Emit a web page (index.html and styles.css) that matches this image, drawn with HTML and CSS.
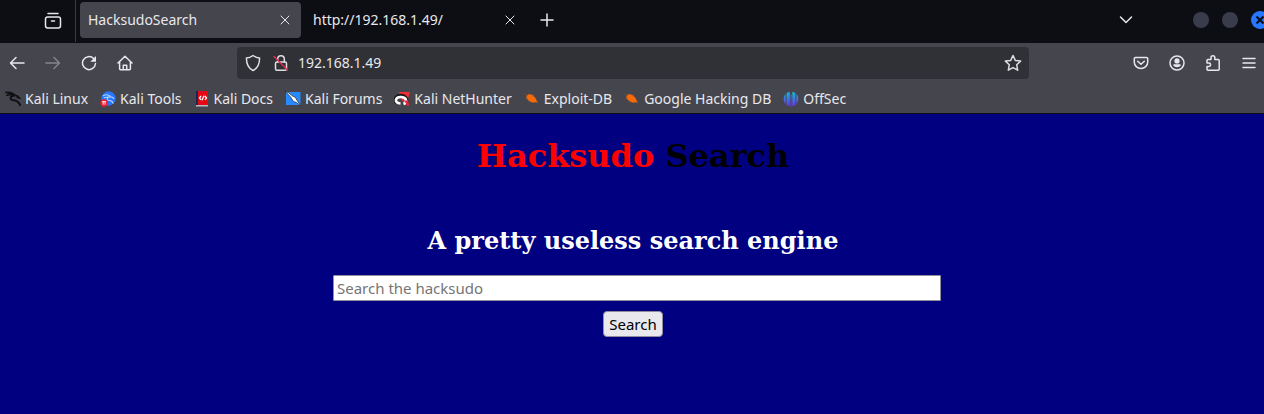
FILE: index.html
```html
<!DOCTYPE html>
<html lang="en">
<head>
<meta charset="utf-8">
<title>HacksudoSearch</title>
<link rel="stylesheet" href="styles.css">
</head>
<body>
<header class="browser">
  <div class="tabbar">
    <button class="view-button" aria-label="Firefox View">
      <svg width="18" height="18" viewBox="0 0 18 18" class="line"><path d="M4 1.500h10"/><rect x="1.500" y="5" width="15" height="11" rx="2.200"/><path d="M7.500 9h3"/></svg>
    </button>
    <div class="tab tab-active">
      <span class="tab-title">HacksudoSearch</span>
      <button class="tab-close" aria-label="Close tab"><svg width="10" height="10" viewBox="0 0 10 10" class="thin"><path d="M1 1l8 8M9 1L1 9"/></svg></button>
    </div>
    <div class="tab">
      <span class="tab-title">http://192.168.1.49/</span>
      <button class="tab-close" aria-label="Close tab"><svg width="10" height="10" viewBox="0 0 10 10" class="thin"><path d="M1 1l8 8M9 1L1 9"/></svg></button>
    </div>
    <button class="icon-button new-tab" aria-label="New tab"><svg width="14" height="14" viewBox="0 0 14 14" class="line"><path d="M7 1v12M1 7h12"/></svg></button>
    <div class="window-controls">
      <button class="icon-button list-tabs" aria-label="List all tabs"><svg width="14" height="14" viewBox="0 0 14 14" class="line"><path d="M1.500 4L7 9.500 12.500 4"/></svg></button>
      <button class="dot" aria-label="Minimize"></button>
      <button class="dot" aria-label="Maximize"></button>
      <button class="dot dot-close" aria-label="Close window"><svg width="10" height="10" viewBox="0 0 10 10"><path d="M1.500 1.500l7 7M8.500 1.500l-7 7" stroke="#0d1017" stroke-width="2.200"/></svg></button>
    </div>
  </div>

  <div class="toolbar">
    <nav class="buttons">
      <button class="icon-button" aria-label="Back"><svg width="16" height="16" viewBox="0 0 16 16" class="line"><path d="M15 8H1.500M7 2.500L1.500 8 7 13.500"/></svg></button>
      <button class="icon-button disabled" aria-label="Forward" disabled><svg width="16" height="16" viewBox="0 0 16 16" class="line"><path d="M1 8h13.500M9 2.500L14.500 8 9 13.500"/></svg></button>
      <button class="icon-button" aria-label="Reload"><svg width="16" height="16" viewBox="0 0 16 16" class="line"><path d="M12.700 3.600A6.500 6.500 0 1 0 14.500 8.500"/><path d="M15 1v5.700H9.300z" fill="currentColor" stroke="none"/></svg></button>
      <button class="icon-button" aria-label="Home"><svg width="16" height="16" viewBox="0 0 16 16" class="line"><path d="M1 8l7-6.700L15 8M2.600 6.800v7a1 1 0 0 0 1 1h8.800a1 1 0 0 0 1-1v-7"/><path d="M6.300 14.500v-4.300h3.400v4.300"/></svg></button>
    </nav>
    <div class="urlbar">
      <svg width="16" height="18" viewBox="0 0 16 18" class="line"><path d="M8 1.500C6 3 3.500 3.900 1.400 4c0 6 1.300 10 6.600 12.500C13.300 14 14.600 10 14.600 4 12.500 3.900 10 3 8 1.500z"/></svg>
      <svg width="16" height="18" viewBox="0 0 16 18" class="line"><rect x="2.500" y="8" width="11" height="8.300" rx="1.500"/><path d="M4.700 8V5a3.300 3.300 0 0 1 6.600 0v3"/><path d="M1 2.500l13.500 13.500" stroke="#e22850"/></svg>
      <input class="url-input" type="text" value="192.168.1.49" aria-label="Address">
      <button class="icon-button" aria-label="Bookmark this page"><svg width="18" height="18" viewBox="0 0 18 18" class="line"><path d="M9 1.500l2.300 4.900 5.300.7-3.900 3.700 1 5.400L9 13.600l-4.700 2.600 1-5.400L1.400 7.100l5.300-.7z"/></svg></button>
    </div>
    <div class="buttons">
      <button class="icon-button" aria-label="Pocket"><svg width="16" height="16" viewBox="0 0 16 16" class="line"><path d="M2.500 2.500h11a1.200 1.200 0 0 1 1.200 1.200v3.500a6.700 6.300 0 0 1-13.400 0V3.700a1.200 1.200 0 0 1 1.200-1.200z"/><path d="M4.700 6.300L8 9.300l3.300-3"/></svg></button>
      <button class="icon-button" aria-label="Account"><svg width="16" height="16" viewBox="0 0 16 16" class="line"><circle cx="8" cy="8" r="7"/><circle cx="8" cy="5.900" r="2.600" fill="currentColor" stroke="none"/><path d="M4.100 10.200a1 1 0 0 1 1-.9h5.800a1 1 0 0 1 1 .9 4.700 4.700 0 0 1-7.800 0z" fill="currentColor" stroke="none"/></svg></button>
      <button class="icon-button" aria-label="Extensions"><svg width="16" height="18" viewBox="0 0 16 18" class="line"><path d="M2 6.500a1 1 0 0 1 1-1h3V3.600a1.900 1.900 0 0 1 3.800 0v1.900h3.400a1 1 0 0 1 1 1v8.800a1 1 0 0 1-1 1H3a1 1 0 0 1-1-1v-2.800h1.900a1.700 1.700 0 0 0 0-3.400H2z"/></svg></button>
      <button class="icon-button" aria-label="Menu"><svg width="14" height="14" viewBox="0 0 14 14" class="line"><path d="M1 2.500h12M1 7h12M1 11.500h12"/></svg></button>
    </div>
  </div>

  <nav class="bookmarks" aria-label="Bookmarks">
    <a class="bookmark" href="#"><svg width="16" height="16" viewBox="0 0 16 16" fill="none" stroke="#101114"><path d="M0 1.500C4 .8 8 2 10 4.200M1 4.500c3-1.200 5-1 8 0M2 2.800l6 .7" stroke-width="1.300"/><path d="M9.500 4.500C5 5 4.500 8.500 7.500 9c3.500.3 6.500 1.500 8 6" stroke-width="2"/><path d="M9 4.500c2.500-.5 4 .5 5.500 2.500l-3-.8" stroke-width="1.600"/></svg>Kali Linux</a>
    <a class="bookmark" href="#"><svg width="16" height="16" viewBox="0 0 16 16"><circle cx="8.500" cy="7.500" r="7.200" fill="#2777ff"/><path d="M3 5c3-2 6-1 7.500.5M4 7c3-1.500 5-.8 6.500-1 2-.3 3 .8 3.500 2M9 6c-3 1-2 3.500.5 3.500 2 .1 3.300 1.500 3.500 3" fill="none" stroke="#b5d2ff" stroke-width="1.100"/><circle cx="4" cy="12" r="3.700" fill="#ed1c2e"/><path d="M2 10.700h4M3.200 10.700v3M5.100 10.700v3" stroke="#fff" stroke-width=".9"/></svg>Kali Tools</a>
    <a class="bookmark" href="#"><svg width="16" height="16" viewBox="0 0 16 16"><path d="M2 0h2v14H2z" fill="#172654"/><path d="M4 0h10v14H4z" fill="#e50914"/><path d="M2 14h12v1.500H2z" fill="#b9bbc4"/><path d="M7 5L5.500 7 7 8.800M11 5l1.500 2L11 8.800M10 4.800L8 9.200" fill="none" stroke="#fff" stroke-width="1.300"/></svg>Kali Docs</a>
    <a class="bookmark" href="#"><svg width="16" height="16" viewBox="0 0 16 16"><path d="M1 1h14.500v13H1z" fill="#258bff"/><path d="M0 0l4 2 3.500 3 2.500 1 2.500 4 3.500 5.500-4.500-4-3-1-3-4.500z" fill="#fff" stroke="#20242c" stroke-width=".7"/></svg>Kali Forums</a>
    <a class="bookmark" href="#"><svg width="16" height="16" viewBox="0 0 16 16"><path d="M5 1h11l-2 7 1 7-4-2-5-6z" fill="#f22b35"/><path d="M2.500 12C-.5 7 4 3.500 8.500 4.800c4.500 1.700 5 5.200 3 8.200" fill="none" stroke="#17181c" stroke-width="3.600"/><path d="M6.500 12.500C-.5 12 1 5.500 7.500 6c5.500.6 6 5.500 2 7" fill="none" stroke="#fff" stroke-width="2.600"/><path d="M11.500 9.500l2.500 5" stroke="#ed2441" stroke-width="2"/></svg>Kali NetHunter</a>
    <a class="bookmark" href="#"><svg width="16" height="16" viewBox="0 0 16 16"><path d="M2.500 5C4 2.500 8 3 10 5.500c1.500 1 2.500 3 2.700 4.500l1.500 1.500-2.500-.3c-2.500.8-5 .2-6.700-1.500C3 8.500 2 7 2.500 5z" fill="#f66a0a"/><path d="M1 3l3 2M1 8l3-1M5 12l1-2M9 3l1 3" stroke="#a3501d" stroke-width=".6"/></svg>Exploit-DB</a>
    <a class="bookmark" href="#"><svg width="16" height="16" viewBox="0 0 16 16"><path d="M2.500 5C4 2.500 8 3 10 5.500c1.500 1 2.500 3 2.700 4.500l1.500 1.500-2.500-.3c-2.500.8-5 .2-6.700-1.500C3 8.500 2 7 2.500 5z" fill="#f66a0a"/><path d="M1 3l3 2M1 8l3-1M5 12l1-2M9 3l1 3" stroke="#a3501d" stroke-width=".6"/></svg>Google Hacking DB</a>
    <a class="bookmark" href="#"><svg width="16" height="16" viewBox="0 0 16 16"><defs><linearGradient id="offsec" gradientUnits="userSpaceOnUse" x1="0" y1="1" x2="0" y2="15"><stop offset="0" stop-color="#16b8d8"/><stop offset="1" stop-color="#6a35f0"/></linearGradient></defs><path d="M2.600 3v10C.1 10.500.1 5.500 2.600 3zM3.600 2L6.700.8v14.400L3.600 14zM7.600 3.500h.8V16h-.8zM9.300.8l3.100 1.200v12l-3.100 1.200zM13.400 3v10c2.500-2.500 2.500-7.500 0-10z" fill="url(#offsec)"/></svg>OffSec</a>
  </nav>
</header>

<main class="page">
  <h1 class="heading"><span class="heading-accent">Hacksudo</span> Search</h1>
  <h2 class="tagline">A pretty useless search engine</h2>
  <form class="search">
    <input class="search-input" type="text" placeholder="Search the hacksudo" aria-label="Search the hacksudo">
    <button class="search-button" type="submit">Search</button>
  </form>
</main>
</body>
</html>
```
FILE: styles.css
```css
* { box-sizing: border-box; }

body {
  margin: 0;
  min-height: 100vh;
  display: flex;
  flex-direction: column;
  background: #000080;
  font-family: "Noto Sans", sans-serif;
}

button {
  margin: 0;
  padding: 0;
  border: 0;
  background: none;
  color: inherit;
  font: inherit;
}

svg { display: block; flex: none; }

.line, .thin {
  fill: none;
  stroke: currentColor;
  stroke-width: 1.5;
  stroke-linecap: round;
  stroke-linejoin: round;
}
.thin { stroke-width: 1; }

.browser {
  background: #45454e;
  color: #e8e8ec;
  font-size: 14px;
  line-height: 20px;
  border-bottom: 1px solid #0d0e14;
}

.tabbar {
  display: flex;
  align-items: center;
  gap: 4px;
  height: 43px;
  padding-bottom: 3px;
  background: #0d0e14;
  overflow: hidden;
}

.view-button {
  display: flex;
  justify-content: flex-end;
  align-items: center;
  align-self: stretch;
  width: 76px;
  margin-bottom: -2px;
  padding-right: 13px;
  border-right: 1px solid #3a3b42;
}

.tab {
  display: flex;
  align-items: center;
  justify-content: space-between;
  width: 221px;
  height: 36px;
  padding: 0 8px;
  border-radius: 4px;
}
.tab-active { background: #45454e; }

.tab-close { display: flex; padding: 3px; }

.icon-button {
  display: flex;
  align-items: center;
  justify-content: center;
  width: 28px;
  height: 32px;
  flex: none;
}
.new-tab { margin-left: 3px; }
.disabled { color: #85858d; }

.window-controls {
  display: flex;
  align-items: center;
  gap: 13px;
  margin-left: auto;
  margin-right: -5px;
}
.list-tabs { margin-right: 40px; }

.dot {
  width: 16px;
  height: 16px;
  border-radius: 50%;
  background: #393d4b;
}
.dot-close {
  display: flex;
  align-items: center;
  justify-content: center;
  width: 18px;
  height: 18px;
  background: #2777ff;
}

.toolbar {
  display: flex;
  align-items: center;
  gap: 98px;
  height: 40px;
  padding: 0 1px 0 3px;
}

.buttons { display: flex; gap: 8px; }

.urlbar {
  display: flex;
  align-items: center;
  gap: 12px;
  flex: 1;
  min-width: 0;
  height: 32px;
  padding: 0 2px 0 8px;
  border-radius: 4px;
  background: #303136;
  color: #dedee2;
}

.url-input {
  flex: 1;
  min-width: 0;
  margin-left: -3px;
  padding: 0;
  border: 0;
  outline: 0;
  background: none;
  color: #e8e8ec;
  font: inherit;
}

.bookmarks {
  display: flex;
  gap: 12px;
  padding: 6px 5px 4px;
}

.bookmark {
  display: flex;
  align-items: center;
  gap: 4px;
  color: #e8e8ec;
  text-decoration: none;
  white-space: nowrap;
}

.page {
  flex: 1;
  padding: 23px 8px 0 10px;
  text-align: center;
}

.heading, .tagline {
  margin: 0;
  font-family: "DejaVu Serif", serif;
  font-weight: bold;
}

.heading {
  color: #000;
  font-size: 32px;
  line-height: 38px;
}
.heading-accent { color: #f00; }

.tagline {
  margin: 52px 0 20px;
  color: #fff;
  font-size: 24px;
  line-height: 28px;
}

.search {
  display: flex;
  flex-direction: column;
  align-items: center;
  gap: 10px;
}

.search-input, .search-button {
  height: 26px;
  border: 1px solid #8f8f9d;
  color: #000;
  font-family: "Noto Sans", sans-serif;
  font-size: 15px;
  line-height: 22px;
}

.search-input {
  width: 608px;
  max-width: 100%;
  margin-left: 8px;
  padding: 0 3px;
  background: #fff;
  border-radius: 1px;
}
.search-input::placeholder { color: #757575; }

.search-button {
  padding: 0 5px;
  background: #e9e9ed;
  border-radius: 4px;
}
```
